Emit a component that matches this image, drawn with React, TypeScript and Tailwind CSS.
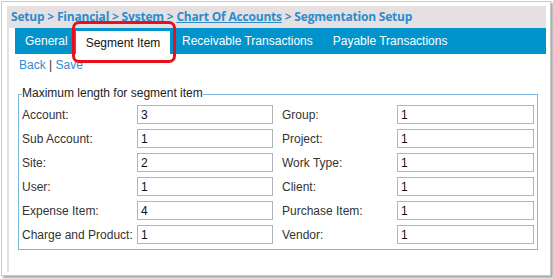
import React from "react";

const leftRows: [string, string][] = [
  ["Account:", "3"],
  ["Sub Account:", "1"],
  ["Site:", "2"],
  ["User:", "1"],
  ["Expense Item:", "4"],
  ["Charge and Product:", "1"],
];
const rightRows: [string, string][] = [
  ["Group:", "1"],
  ["Project:", "1"],
  ["Work Type:", "1"],
  ["Client:", "1"],
  ["Purchase Item:", "1"],
  ["Vendor:", "1"],
];

export default function App() {
  return (
    <div className="w-[553px] h-[279px] bg-white pl-[1px] pt-[1px]" style={{ fontFamily: '"Liberation Sans", Arial, sans-serif' }}>
      <div className="w-[550px] h-[275px] border border-[#c9c9c9] shadow-[2px_2px_2px_rgba(0,0,0,0.35)] pl-[5px] pr-[4px] pt-[4px] pb-[3px] flex flex-col bg-white">
        <div
          className="h-[22px] bg-[#e6e0e3] pl-[4px] flex items-center text-[12px] tracking-[-0.2px] font-bold text-[#2a8dcd] whitespace-pre"
          style={{ fontFamily: '"Open Sans", sans-serif' }}
        >
          <span>{"Setup > Financial > System > "}</span>
          <span className="underline">Chart Of Accounts</span>
          <span>{" > Segmentation Setup"}</span>
        </div>
        <div className="flex-1 border-l-2 border-[#e6e0e3] pl-[6px] flex flex-col">
          <div className="h-[26px] bg-[#0194cc] flex items-end text-[12px] text-white">
            <div className="h-[26px] flex items-center pl-[10px] w-[61px]">General</div>
            <div className="relative h-[23px] w-[94px] bg-white text-[#111] flex items-center justify-center">
              Segment Item
              <div className="absolute left-[-4px] right-[-6px] top-[-10px] bottom-[-9px] border-[3px] border-[#e8101a] rounded-[7px]" />
            </div>
            <div className="h-[26px] flex items-center pl-[12px] pr-[10px]">Receivable Transactions</div>
            <div className="h-[26px] flex items-center pl-[10px]">Payable Transactions</div>
          </div>
          <div className="pl-[4px] pr-[8px]">
            <div className="mt-[2px] h-[18px] leading-[18px] text-[12px] text-[#333]">
              <span className="text-[#2a8dd6]">Back</span> | <span className="text-[#2a8dd6]">Save</span>
            </div>
            <fieldset className="mt-[12px] ml-[-1px] border border-[#7bb9dd] pl-[3px] pr-[3px] pt-[3px] pb-[5px]">
              <legend className="text-[12px] leading-[14px] pb-[2px] text-[#222]">Maximum length for segment item</legend>
              <div className="grid grid-cols-[115px_136px_124px_137px] gap-y-[5px] text-[12px] text-[#333]">
                {leftRows.map((l, i) => (
                  <React.Fragment key={i}>
                    <div className="h-[19px] flex items-center whitespace-nowrap">{l[0]}</div>
                    <div className="h-[19px] border border-[#b1b5b8] pl-[3px] flex items-center text-[#111]">{l[1]}</div>
                    <div className="h-[19px] flex items-center pl-[9px] whitespace-nowrap">{rightRows[i][0]}</div>
                    <div className="h-[19px] border border-[#b1b5b8] pl-[3px] flex items-center text-[#111]">{rightRows[i][1]}</div>
                  </React.Fragment>
                ))}
              </div>
            </fieldset>
          </div>
        </div>
      </div>
    </div>
  );
}
